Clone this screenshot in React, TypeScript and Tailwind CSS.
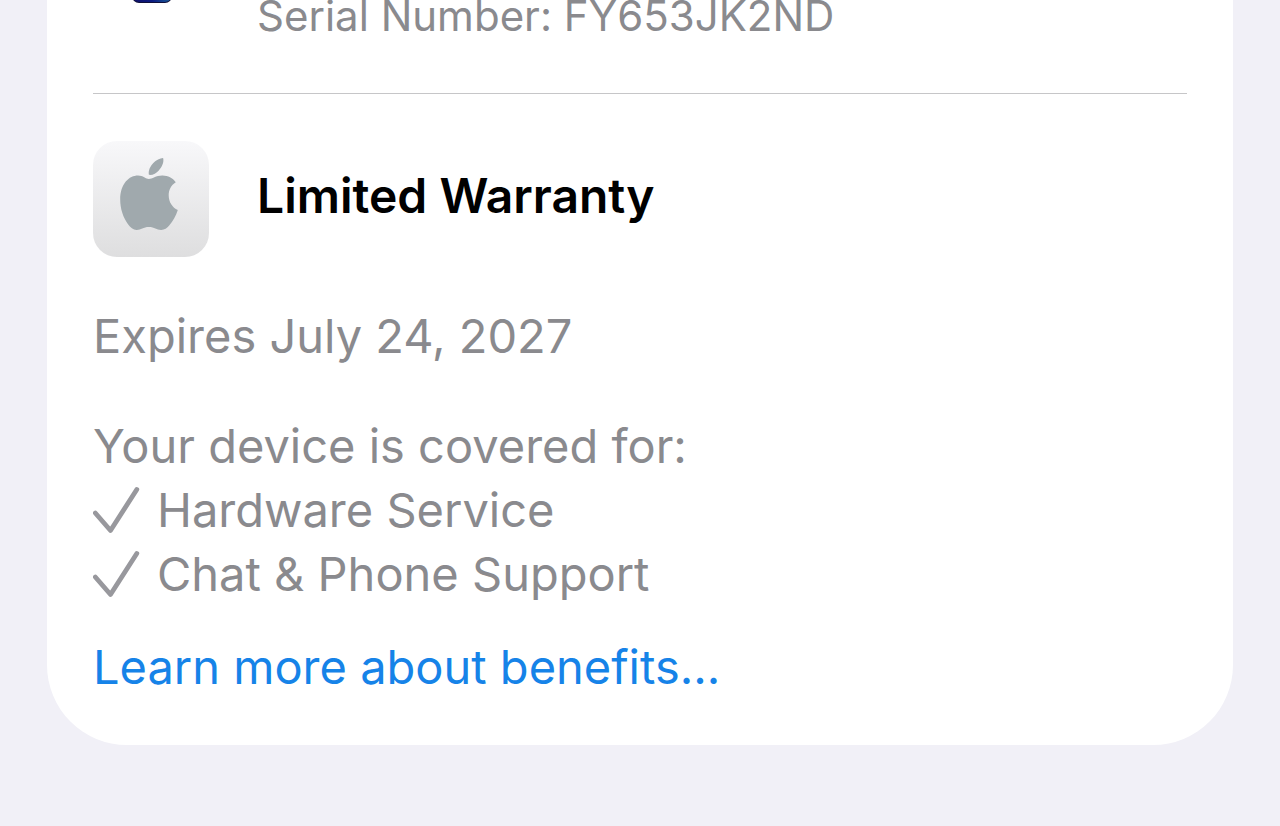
import React from 'react';

const coverage = ['Hardware Service', 'Chat & Phone Support'];

function CheckIcon() {
  return (
    <svg viewBox="0 0 48 48" className="h-12 w-12 shrink-0" fill="none" aria-hidden="true">
      <path
        d="M2.3 27L17.5 44.5L43.8 3.5"
        stroke="#98989d"
        strokeWidth="4.8"
        strokeLinecap="round"
        strokeLinejoin="round"
      />
    </svg>
  );
}

function AppleIcon() {
  return (
    <div className="flex size-[116px] shrink-0 justify-center rounded-3xl bg-linear-to-b from-[#f8f8fa] to-[#dededf] pt-4">
      <svg viewBox="2 0 60 74" className="h-[74px] w-[60px] overflow-visible" fill="#a0a9ad" aria-hidden="true">
        <path d="M44.1 1C45.3 5.2 42.8 10.2 39.8 13.4C37.2 16.3 33.6 18.3 29.9 17.8C29.1 13.4 31.4 9 34.3 6C37 3.2 41 1.2 44.1 1Z" />
        <path d="M29.8 22C33.2 22 37.4 18.3 43.6 18.5C49 18.7 53.6 20.8 56.8 25.2C52 28.2 49.6 33 49.7 38.6C49.8 45.2 53.4 50.8 58.8 53C57 58.8 54 64 50.2 68.4C48 71 45.6 72.8 42.2 72.9C37.6 73 35.6 70 29.9 70C24.3 70 22 72.9 17.8 73C14.2 73.1 11.4 70.4 9 67.2C4.2 60.8 1.2 51.8 1.2 42.6C1.2 26.6 10.2 18.5 19 18.5C24 18.5 27 22 29.8 22Z" />
      </svg>
    </div>
  );
}

// Only the lower edge of the phone shows above the fold
function PhoneIcon() {
  return (
    <svg viewBox="0 0 116 116" className="size-[116px] shrink-0" aria-hidden="true">
      <defs>
        <linearGradient id="phoneScreen" x1="0" x2="1">
          <stop offset="0" stopColor="#10106a" />
          <stop offset="0.5" stopColor="#0a1a80" />
          <stop offset="1" stopColor="#1b5c98" />
        </linearGradient>
      </defs>
      <rect x="39" y="16" width="40" height="83" rx="7" fill="#10103a" />
      <rect x="40" y="18" width="38" height="80" rx="6" fill="url(#phoneScreen)" />
    </svg>
  );
}

export default function App() {
  return (
    <main className="min-h-screen overflow-hidden bg-[#f1f0f7] font-['Inter',sans-serif] text-[47px] leading-[64px] text-[#8a8a8e]">
      <section className="-mt-24 mx-[47px] rounded-b-[80px] bg-white px-[46px] pb-[46px]">
        <div className="flex items-end gap-12 border-b border-[#c6c6c8] pb-[49px]">
          <div className="pb-6">
            <PhoneIcon />
          </div>
          <p className="text-[42px] leading-[56px]">Serial Number: FY653JK2ND</p>
        </div>

        <div className="mt-[47px] flex items-center gap-12">
          <AppleIcon />
          <h2 className="pb-1.5 text-[48px] leading-[64px] font-semibold text-black">Limited Warranty</h2>
        </div>

        <p className="mt-[47px]">Expires July 24, 2027</p>

        <div className="mt-[46px]">
          <p>Your device is covered for:</p>
          <ul>
            {coverage.map((item) => (
              <li key={item} className="flex items-center gap-4">
                <CheckIcon />
                {item}
              </li>
            ))}
          </ul>
        </div>

        <a href="#benefits" className="mt-[29px] block text-[#1683e8]">
          Learn more about benefits...
        </a>
      </section>
    </main>
  );
}
